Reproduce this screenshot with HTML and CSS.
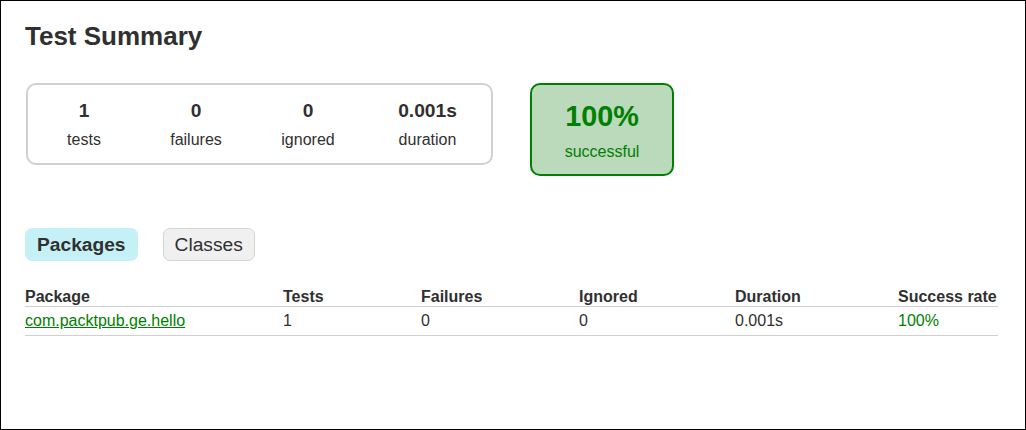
FILE: index.html
```html
<!DOCTYPE html>
<html>
<head>
<meta charset="utf-8">
<link rel="stylesheet" href="styles.css">
</head>
<body>
<div class="frame">
  <h1 class="title">Test Summary</h1>
  <div class="summary">
    <div class="summary-group">
      <div class="info-box">
        <div class="counter">1</div>
        <p class="label">tests</p>
      </div>
      <div class="info-box">
        <div class="counter">0</div>
        <p class="label">failures</p>
      </div>
      <div class="info-box">
        <div class="counter">0</div>
        <p class="label">ignored</p>
      </div>
      <div class="info-box info-box-wide">
        <div class="counter">0.001s</div>
        <p class="label">duration</p>
      </div>
    </div>
    <div class="success-rate">
      <div class="percent">100%</div>
      <p class="label">successful</p>
    </div>
  </div>
  <ul class="tab-links">
    <li class="tab tab-selected"><a href="#tab0">Packages</a></li>
    <li class="tab"><a href="#tab1">Classes</a></li>
  </ul>
  <table class="results">
    <thead>
      <tr>
        <th class="col-package">Package</th>
        <th class="col-tests">Tests</th>
        <th class="col-failures">Failures</th>
        <th class="col-ignored">Ignored</th>
        <th class="col-duration">Duration</th>
        <th class="col-rate">Success rate</th>
      </tr>
    </thead>
    <tbody>
      <tr>
        <td><a class="pkg-link" href="#">com.packtpub.ge.hello</a></td>
        <td>1</td>
        <td>0</td>
        <td>0</td>
        <td>0.001s</td>
        <td class="success">100%</td>
      </tr>
    </tbody>
  </table>
</div>
</body>
</html>
```
FILE: styles.css
```css
html, body {
  margin: 0;
  padding: 0;
  background: #ffffff;
}

body {
  font-family: "Liberation Sans", Arial, sans-serif;
  font-size: 16px;
  color: #303030;
}

.frame {
  box-sizing: border-box;
  width: 1026px;
  height: 430px;
  border: 1px solid #000000;
  padding: 21px 24px 0 24px;
  overflow: hidden;
}

.title {
  margin: 0;
  font-size: 26px;
  font-weight: bold;
  line-height: 29px;
  color: #303030;
}

.summary {
  display: flex;
  align-items: flex-start;
  margin-top: 32px;
  margin-left: 1px;
}

.summary-group {
  display: flex;
  gap: 2px;
  padding: 0 1px;
  border: 2px solid #d0d0d0;
  border-radius: 10px;
}

.info-box {
  width: 110px;
  padding: 15px 0 14px 0;
  text-align: center;
}

.info-box-wide {
  width: 125px;
}

.counter {
  font-size: 19.2px;
  font-weight: bold;
  line-height: 22px;
  margin-bottom: 8px;
}

.label {
  margin: 0;
  font-size: 16px;
  line-height: 19px;
}

.success-rate {
  width: 140px;
  margin-left: 37px;
  padding: 15px 0 13px 0;
  text-align: center;
  background-color: #bbd9bb;
  border: 2px solid #008000;
  border-radius: 10px;
  color: #008000;
}

.percent {
  font-size: 28.8px;
  font-weight: bold;
  line-height: 32px;
  margin-bottom: 10px;
}

.tab-links {
  display: flex;
  list-style: none;
  margin: 52px 0 0 0;
  padding: 0;
}

.tab {
  padding: 5px 11px;
  margin-right: 25px;
  border: 1px solid #d4d4d4;
  border-radius: 7px;
  background-color: #f0f0f0;
}

.tab a {
  display: block;
  font-size: 19.2px;
  line-height: 21px;
  color: #303030;
  text-decoration: none;
}

.tab-selected {
  background-color: #c5f0f5;
  border-color: #c5f0f5;
}

.tab-selected a {
  font-weight: bold;
}

.results {
  margin-top: 27px;
  border-collapse: collapse;
  border-bottom: 1px solid #d0d0d0;
}

.results th {
  text-align: left;
  white-space: nowrap;
  padding: 0 0 0 96px;
  font-weight: bold;
  line-height: 18px;
  border-bottom: 1px solid #d0d0d0;
}

.results td {
  white-space: nowrap;
  padding: 5px 0 5px 96px;
  line-height: 18px;
}

.results th:first-child,
.results td:first-child {
  padding-left: 0;
}

.results .col-package { width: 162px; }
.results .col-tests { width: 42px; }
.results .col-failures { width: 62px; }
.results .col-ignored { width: 60px; }
.results .col-duration { width: 67px; }
.results .col-rate { width: 100px; }

.pkg-link {
  color: #008000;
  text-decoration: underline;
}

.success {
  color: #008000;
}
```
